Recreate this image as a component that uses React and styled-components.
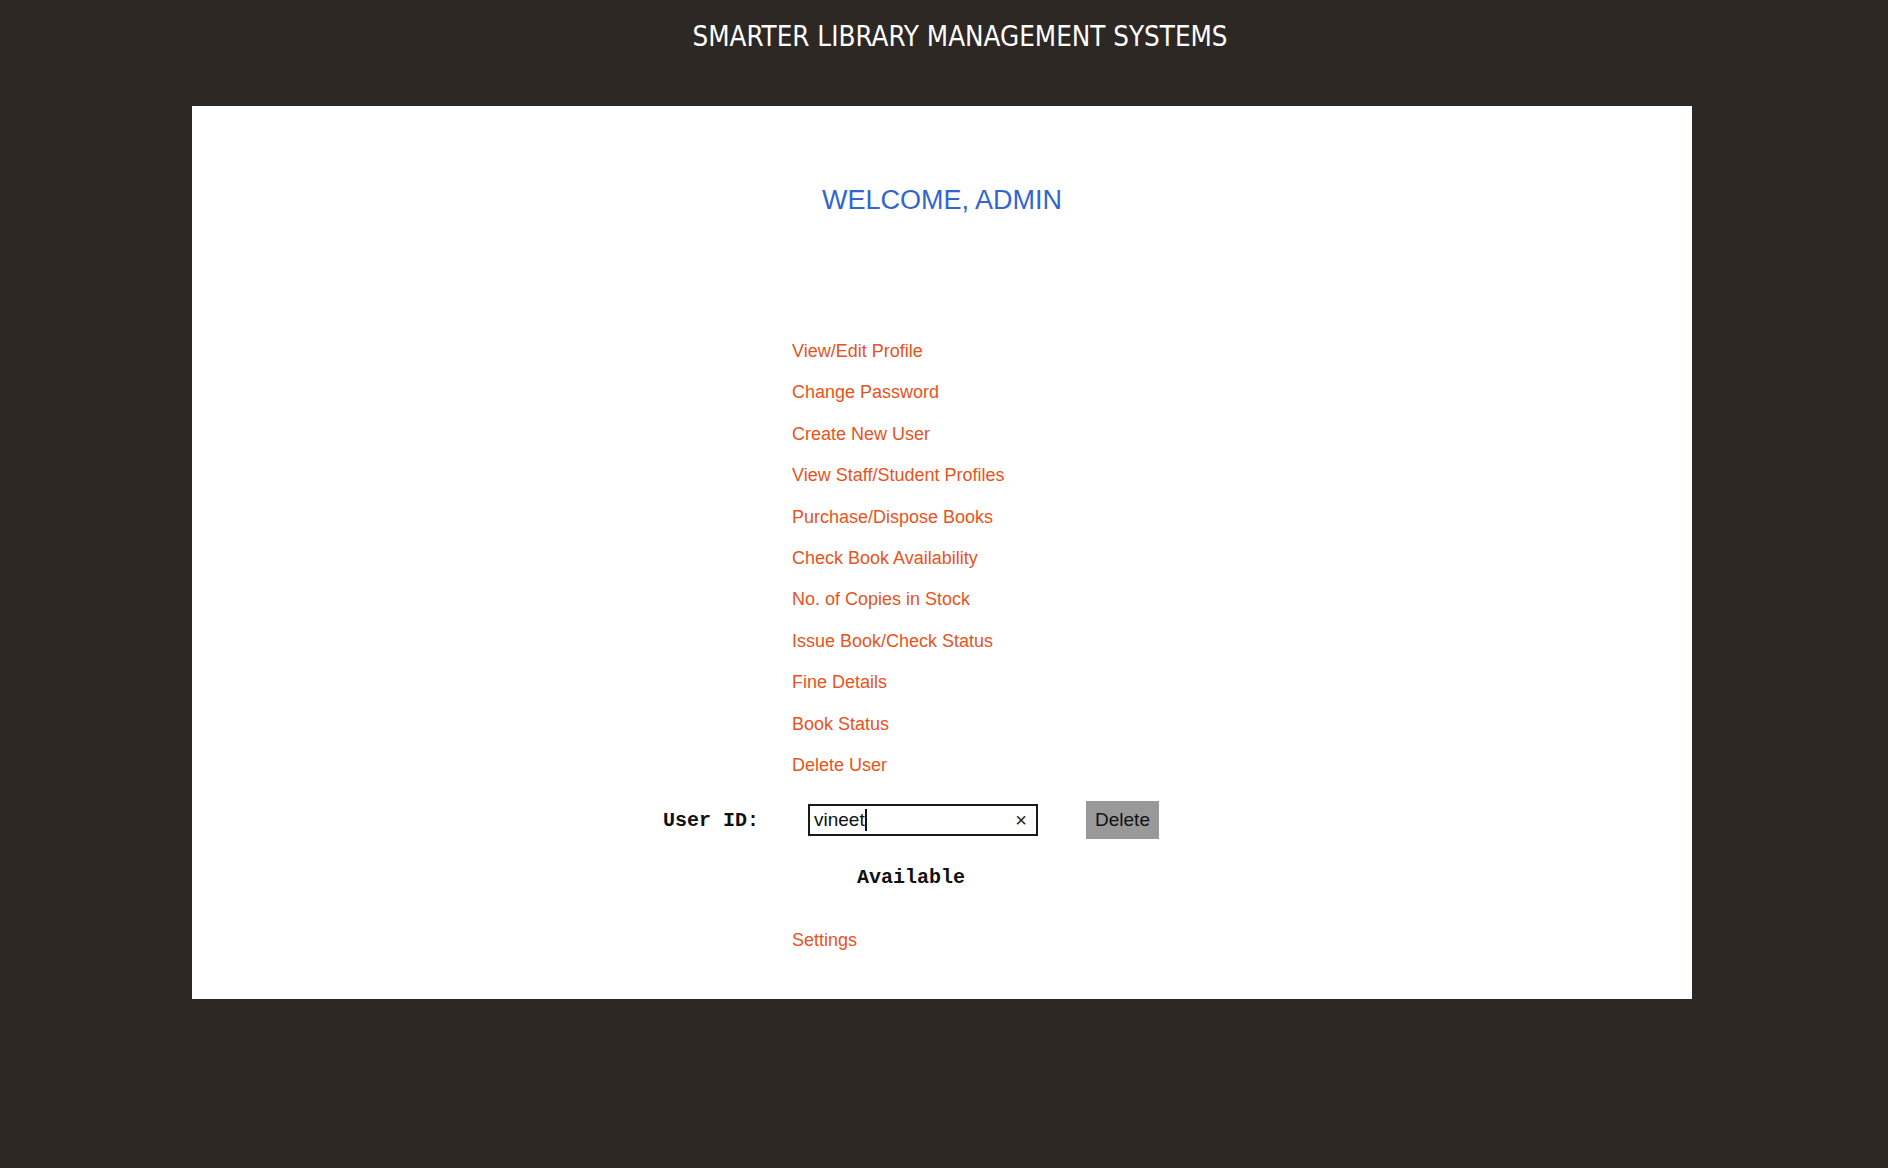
import React from "react";
import styled, { createGlobalStyle } from "styled-components";

const GlobalStyle = createGlobalStyle`
  html, body {
    margin: 0;
    padding: 0;
    background-color: #2d2824;
  }
  body {
    min-height: 1168px;
    font-family: "Liberation Sans", Arial, sans-serif;
  }
`;

const Page = styled.div`
  width: 1888px;
  min-height: 1168px;
  background-color: #2d2824;
`;

const Header = styled.header`
  height: 106px;
  display: flex;
  justify-content: center;
  box-sizing: border-box;
  padding-top: 19px;
  padding-left: 32px;
`;

const SiteTitle = styled.h1`
  margin: 0;
  font-family: "DejaVu Sans Condensed", "DejaVu Sans", sans-serif;
  font-weight: normal;
  font-size: 27.5px;
  line-height: 34px;
  color: #ffffff;
`;

const Card = styled.main`
  margin-left: 192px;
  width: 1500px;
  box-sizing: border-box;
  background-color: #ffffff;
  padding: 79px 0 37px;
`;

const Welcome = styled.h2`
  margin: 0;
  text-align: center;
  font-family: "Liberation Sans", Arial, sans-serif;
  font-weight: normal;
  font-size: 27px;
  line-height: 30px;
  color: #3366cc;
`;

const Menu = styled.ul`
  list-style: none;
  margin: 116px 0 0;
  padding: 0 0 0 600px;
`;

const MenuLink = styled.a`
  display: block;
  font-family: "Liberation Sans", Arial, sans-serif;
  font-size: 18px;
  line-height: 41.4px;
  color: #e8531c;
  text-decoration: none;
  width: max-content;
`;

const DeleteForm = styled.div`
  margin: 15px 0 0 471px;
  width: 496px;
`;

const Row = styled.div`
  display: flex;
  align-items: center;
  height: 38px;
`;

const Label = styled.label`
  width: 145px;
  font-family: "Liberation Mono", "Courier New", monospace;
  font-weight: bold;
  font-size: 20px;
  color: #111;
`;

const InputBox = styled.div`
  width: 230px;
  height: 32px;
  box-sizing: border-box;
  border: 2px solid #1a1a1a;
  display: flex;
  align-items: center;
  padding: 0 9px 0 4px;
  font-family: "Liberation Sans", Arial, sans-serif;
  font-size: 19px;
  color: #111;
`;

const Caret = styled.span`
  display: inline-block;
  width: 2px;
  height: 22px;
  background: #111;
`;

const Clear = styled.span`
  margin-left: auto;
  font-size: 20px;
  line-height: 1;
  color: #222;
`;

const DeleteButton = styled.button`
  margin-left: 48px;
  width: 73px;
  height: 38px;
  border: none;
  background-color: #999999;
  font-family: "Liberation Sans", Arial, sans-serif;
  font-size: 19px;
  color: #111;
  padding: 0;
`;

const Status = styled.p`
  margin: 27px 0 0;
  text-align: center;
  font-family: "Liberation Mono", "Courier New", monospace;
  font-weight: bold;
  font-size: 20px;
  line-height: 24px;
  color: #111;
`;

const Footer = styled.div`
  margin-top: 30px;
  padding-left: 600px;
`;

const links = [
  "View/Edit Profile",
  "Change Password",
  "Create New User",
  "View Staff/Student Profiles",
  "Purchase/Dispose Books",
  "Check Book Availability",
  "No. of Copies in Stock",
  "Issue Book/Check Status",
  "Fine Details",
  "Book Status",
  "Delete User",
];

export default function App() {
  return (
    <Page>
      <GlobalStyle />
      <Header>
        <SiteTitle>SMARTER LIBRARY MANAGEMENT SYSTEMS</SiteTitle>
      </Header>
      <Card>
        <Welcome>WELCOME, ADMIN</Welcome>
        <Menu>
          {links.map((l) => (
            <li key={l}>
              <MenuLink href="#">{l}</MenuLink>
            </li>
          ))}
        </Menu>
        <DeleteForm>
          <Row>
            <Label>User ID:</Label>
            <InputBox>
              <span>vineet</span>
              <Caret />
              <Clear>×</Clear>
            </InputBox>
            <DeleteButton>Delete</DeleteButton>
          </Row>
          <Status>Available</Status>
        </DeleteForm>
        <Footer>
          <MenuLink href="#">Settings</MenuLink>
        </Footer>
      </Card>
    </Page>
  );
}
